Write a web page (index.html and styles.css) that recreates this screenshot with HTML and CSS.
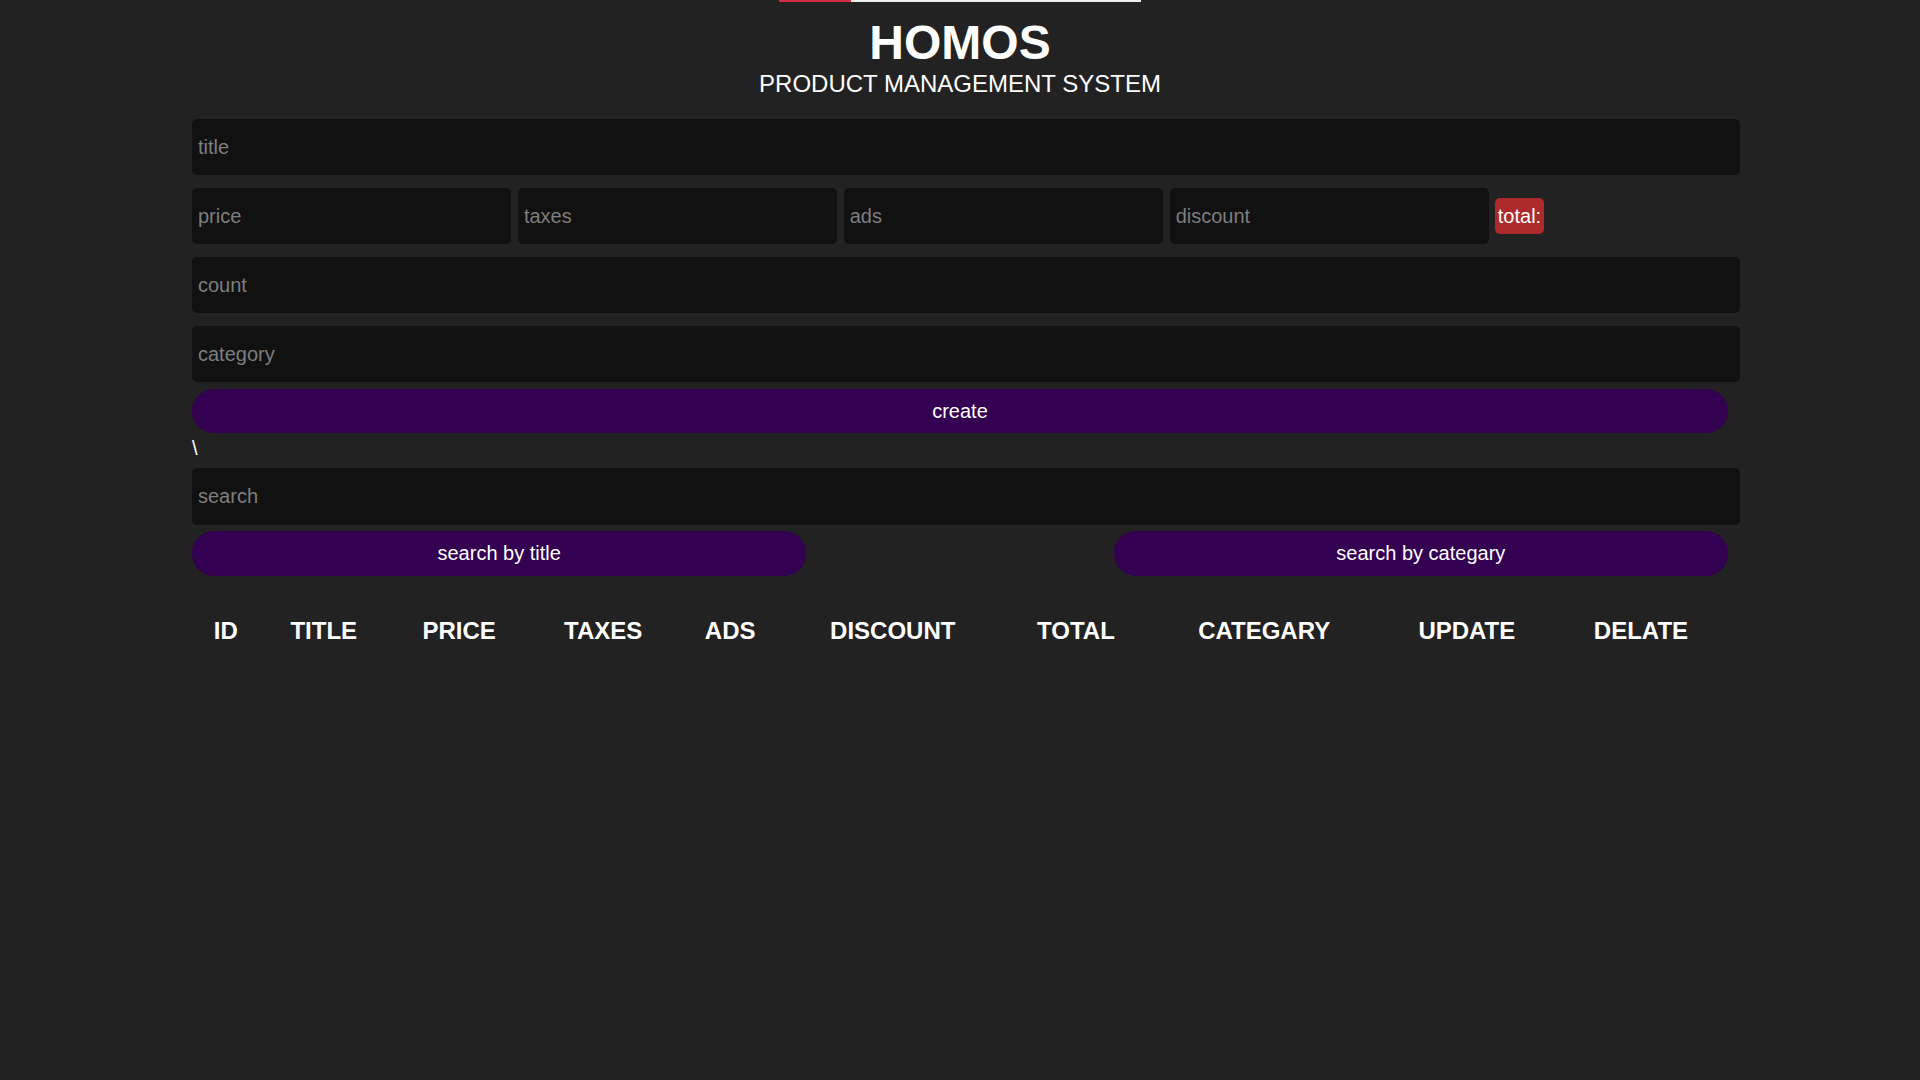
FILE: index.html
```html
<!DOCTYPE html>
<html lang="en">
<head>
<meta charset="UTF-8">
<title>HOMOS - Product Management System</title>
<link rel="stylesheet" href="styles.css">
</head>
<body>
<div class="progress"><span class="progress-fill"></span></div>
<div class="crud">
  <header class="head">
    <h1 class="brand">HOMOS</h1>
    <p class="subtitle">PRODUCT MANAGEMENT SYSTEM</p>
  </header>
  <div class="inputs">
    <input class="field" type="text" placeholder="title">
    <div class="price-row">
      <input class="field small" type="number" placeholder="price">
      <input class="field small" type="number" placeholder="taxes">
      <input class="field small" type="number" placeholder="ads">
      <input class="field small" type="number" placeholder="discount">
      <small class="total">total:</small>
    </div>
    <input class="field" type="number" placeholder="count">
    <input class="field" type="text" placeholder="category">
    <button class="btn btn-create">create</button>
  </div>
  <div class="stray">\</div>
  <div class="search-block">
    <input class="field" type="text" placeholder="search">
    <div class="btn-search-row">
      <button class="btn btn-half">search by title</button>
      <button class="btn btn-half">search by categary</button>
    </div>
  </div>
  <div class="outputs">
    <table class="products">
      <thead>
        <tr>
          <th>ID</th>
          <th>TITLE</th>
          <th>PRICE</th>
          <th>TAXES</th>
          <th>ADS</th>
          <th>DISCOUNT</th>
          <th>TOTAL</th>
          <th>CATEGARY</th>
          <th>UPDATE</th>
          <th>DELATE</th>
        </tr>
      </thead>
      <tbody></tbody>
    </table>
  </div>
</div>
</body>
</html>
```
FILE: styles.css
```css
* {
  margin: 0;
  padding: 0;
}

html, body {
  background: #222222;
}

body {
  font-family: "Liberation Sans", Arial, sans-serif;
  color: #ffffff;
  min-height: 1080px;
}

.progress {
  width: 362px;
  height: 2px;
  margin: 0 auto;
  background: #eeeeee;
  display: flex;
}

.progress-fill {
  width: 72px;
  height: 2px;
  background: #d42a42;
}

.crud {
  width: 1536px;
  margin: 0 auto;
}

.head {
  text-align: center;
  padding-top: 17px;
}

.brand {
  font-size: 48px;
  font-weight: bold;
  line-height: 48px;
}

.subtitle {
  font-size: 24px;
  line-height: 28px;
  margin-top: 3px;
}

.inputs {
  margin-top: 21px;
  display: flex;
  flex-direction: column;
}

.field {
  box-sizing: content-box;
  width: 100%;
  height: 56px;
  padding: 0 6px;
  border: none;
  outline: none;
  border-radius: 5px;
  background: #111111;
  color: #ffffff;
  font-family: "Liberation Sans", Arial, sans-serif;
  font-size: 20px;
  margin-bottom: 13px;
  -moz-appearance: textfield;
}

.field::-webkit-outer-spin-button,
.field::-webkit-inner-spin-button {
  -webkit-appearance: none;
  margin: 0;
}

.field::placeholder {
  color: #7e7e7e;
}

.price-row {
  display: flex;
  align-items: center;
  gap: 6.7px;
  margin-bottom: 13px;
}

.price-row .field {
  margin-bottom: 0;
}

.field.small {
  width: 307.2px;
}

.total {
  background: #ad2a2a;
  color: #ffffff;
  font-size: 20px;
  line-height: 24px;
  padding: 6px 3px;
  border-radius: 5px;
  margin-left: -0.7px;
}

.inputs > .field:nth-last-of-type(1) {
  margin-bottom: 7px;
}

.btn {
  border: none;
  background: #330052;
  color: #ffffff;
  font-family: "Liberation Sans", Arial, sans-serif;
  font-size: 20px;
  height: 44px;
  border-radius: 22px;
  cursor: pointer;
}

.btn-create {
  width: 100%;
}

.stray {
  font-size: 20px;
  line-height: 23px;
  margin-top: 4px;
}

.search-block {
  margin-top: 8px;
}

.search-block .field {
  height: 57px;
  margin-bottom: 6px;
  display: block;
}

.btn-search-row {
  display: flex;
  justify-content: space-between;
}

.btn-half {
  width: 40%;
  height: 45px;
}

.outputs {
  margin-top: 38px;
}

.products {
  width: 100%;
  border-spacing: 2px;
}

.products th {
  font-size: 24px;
  font-weight: bold;
  line-height: 28px;
  padding: 1px 9px;
  text-align: center;
}
```
